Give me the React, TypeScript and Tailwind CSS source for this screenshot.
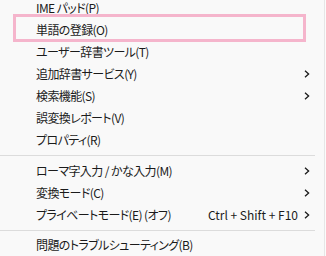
import React from "react";

const Chevron = () => (
  <svg width="6" height="8" viewBox="0 0 6 8" className="block">
    <path d="M1 0.8 L4.6 4 L1 7.2" fill="none" stroke="#1b1b1b" strokeWidth="1.3" />
  </svg>
);

type Item = { label: string; sub?: boolean; shortcut?: string };

const Row = ({ item }: { item: Item }) => (
  <div className="h-[22px] flex items-center pl-[36px] pr-[14px]">
    <span className="flex-1 whitespace-nowrap tracking-[-0.6px]">{item.label}</span>
    {item.shortcut && <span className="mr-[6px] whitespace-nowrap">{item.shortcut}</span>}
    {item.sub && <Chevron />}
  </div>
);

const Sep = ({ h }: { h: string }) => (
  <div className={`${h} flex items-center pr-[9px]`}>
    <div className="h-px w-full bg-[#dcdcdc]" />
  </div>
);

export default function App() {
  const g1: Item[] = [
    { label: "IME パッド(P)" },
    { label: "単語の登録(O)" },
    { label: "ユーザー辞書ツール(T)" },
    { label: "追加辞書サービス(Y)", sub: true },
    { label: "検索機能(S)", sub: true },
    { label: "誤変換レポート(V)" },
    { label: "プロパティ(R)" },
  ];
  const g2: Item[] = [
    { label: "ローマ字入力 / かな入力(M)", sub: true },
    { label: "変換モード(C)", sub: true },
    { label: "プライベートモード(E) (オフ)", shortcut: "Ctrl + Shift + F10", sub: true },
  ];
  return (
    <div className="w-[326px] h-[256px] overflow-hidden bg-[#f9f9f9] flex">
      <div
        className="relative w-[324px] h-[256px] text-[12px] text-[#1b1b1b] leading-none"
        style={{ fontFamily: '"Noto Sans CJK JP", "Noto Sans", sans-serif', fontFeatureSettings: '"palt" 1' }}
      >
        <div className="-mt-[3px]">
          {g1.map((it) => (
            <Row key={it.label} item={it} />
          ))}
          <Sep h="h-[9px]" />
          {g2.map((it) => (
            <Row key={it.label} item={it} />
          ))}
          <Sep h="h-[8px]" />
          <Row item={{ label: "問題のトラブルシューティング(B)" }} />
        </div>
        <div className="absolute left-[13px] top-[14px] w-[293px] h-[28px] border-[3px] border-[#f5b5cc]" />
      </div>
      <div className="w-px h-full bg-[#e6e6e6]" />
      <div className="flex-1 bg-[#fbfbfb]" />
    </div>
  );
}
